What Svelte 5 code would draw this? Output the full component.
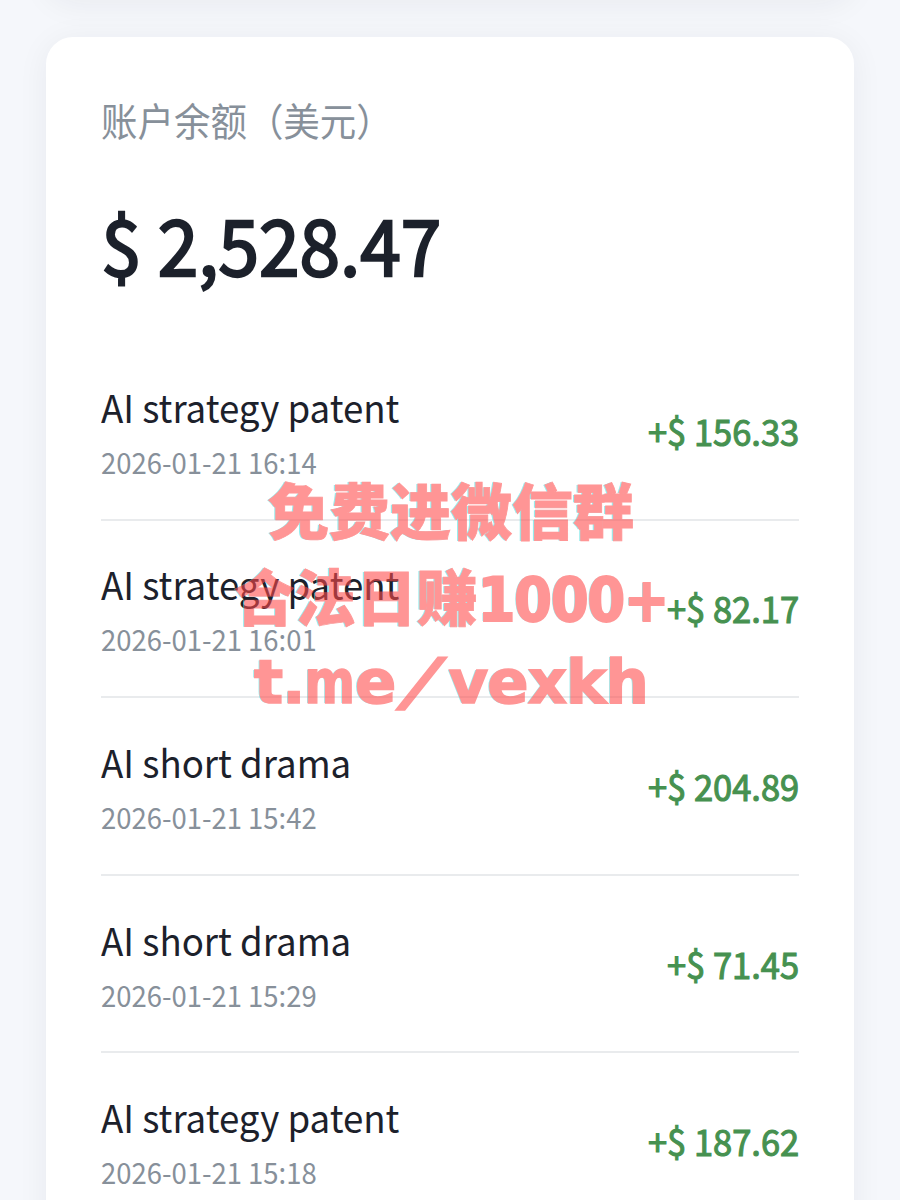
<script lang="ts">
  interface Entry {
    title: string
    time: string
    amount: string
  }

  const entries: Entry[] = [
    { title: "AI strategy patent", time: "2026-01-21 16:14", amount: "156.33" },
    { title: "AI strategy patent", time: "2026-01-21 16:01", amount: "82.17" },
    { title: "AI short drama", time: "2026-01-21 15:42", amount: "204.89" },
    { title: "AI short drama", time: "2026-01-21 15:29", amount: "71.45" },
    { title: "AI strategy patent", time: "2026-01-21 15:18", amount: "187.62" },
  ]
</script>

<div class="page">
  <div class="previous"></div>
  <section class="card">
    <p class="label">账户余额（美元）</p>
    <p class="balance">$ 2,528.47</p>
    <ul class="list">
      {#each entries as entry}
        <li class="entry">
          <div>
            <p class="title">{entry.title}</p>
            <p class="time">{entry.time}</p>
          </div>
          <span class="amount">+$ {entry.amount}</span>
        </li>
      {/each}
    </ul>
  </section>
  <div class="overlay">
    <p class="line">免费进微信群</p>
    <p class="line">合法日赚<span class="digits">1000+</span></p>
    <p class="line line--link">t.<span class="m">m</span>e<span class="slash">/</span>vexkh</p>
  </div>
</div>

<style>
  :global(body) {
    overflow: hidden;
  }

  .page {
    position: relative;
    display: flex;
    flex-direction: column;
    height: 1200px;
    overflow: hidden;
    background: #f5f7fb;
    font-family: "Noto Sans CJK SC", sans-serif;
    color: #1c212b;
  }

  /* only the shadow of the card above is in view */
  .previous {
    flex: none;
    height: 200px;
    margin: -200px 46px 37px;
    border-radius: 27px;
    background: #fff;
    box-shadow: 0 4px 32px rgba(30, 35, 50, 0.06);
  }

  .card {
    flex: none;
    box-sizing: border-box;
    height: 1240px;
    margin: 0 46px;
    padding: 54px 55px;
    border-radius: 27px;
    background: #fff;
    box-shadow: 0 4px 32px rgba(30, 35, 50, 0.06);
  }

  p,
  ul {
    margin: 0;
    padding: 0;
  }

  /* slightly condensed text */
  .label,
  .balance,
  .title,
  .time,
  .amount {
    transform: scaleX(0.95);
    transform-origin: left center;
  }

  .label {
    font-size: 38.4px;
    line-height: 56px;
    color: #87909a;
  }

  .balance {
    margin-top: 44px;
    font-size: 76.8px;
    line-height: 104px;
    -webkit-text-stroke: 2.4px currentColor;
  }

  .list {
    margin-top: 48px;
    list-style: none;
  }

  .entry {
    display: flex;
    box-sizing: border-box;
    height: 177.6px;
    align-items: center;
    justify-content: space-between;
    border-bottom: 2px solid #e9ebed;
  }

  .title {
    margin-top: 2px;
    font-size: 38.6px;
    line-height: 58px;
  }

  .time {
    font-size: 28.9px;
    line-height: 52px;
    color: #87909a;
  }

  .amount {
    margin-bottom: 2px;
    font-size: 36.3px;
    color: #469150;
    transform-origin: right center;
    -webkit-text-stroke: 1.1px currentColor;
  }

  .overlay {
    position: absolute;
    top: 466px;
    left: 1px;
    width: 900px;
    text-align: center;
    opacity: 0.58;
    pointer-events: none;
  }

  .line {
    height: 86px;
    font-size: 61px;
    font-weight: 900;
    line-height: 86px;
    white-space: nowrap;
    color: #ff4a4a;
    text-shadow: -1.5px -0.5px 0 #4de0e0;
    -webkit-text-stroke: 0.8px currentColor;
  }

  .digits {
    font-family: "DejaVu Sans Condensed", "DejaVu Sans", sans-serif;
    font-stretch: condensed;
    font-size: 60px;
    letter-spacing: -1px;
    -webkit-text-stroke: 2px currentColor;
  }

  .line--link {
    padding-top: 1px;
    font-family: "DejaVu Sans", sans-serif;
    font-size: 61px;
    letter-spacing: -1px;
    -webkit-text-stroke: 1.5px currentColor;
  }

  .m {
    display: inline-block;
    margin: 0 -6px;
    transform: scaleX(0.8);
  }

  .slash {
    display: inline-block;
    margin: 0 16px;
    transform: skewX(-26deg);
    -webkit-text-stroke: 4px currentColor;
  }
</style>
